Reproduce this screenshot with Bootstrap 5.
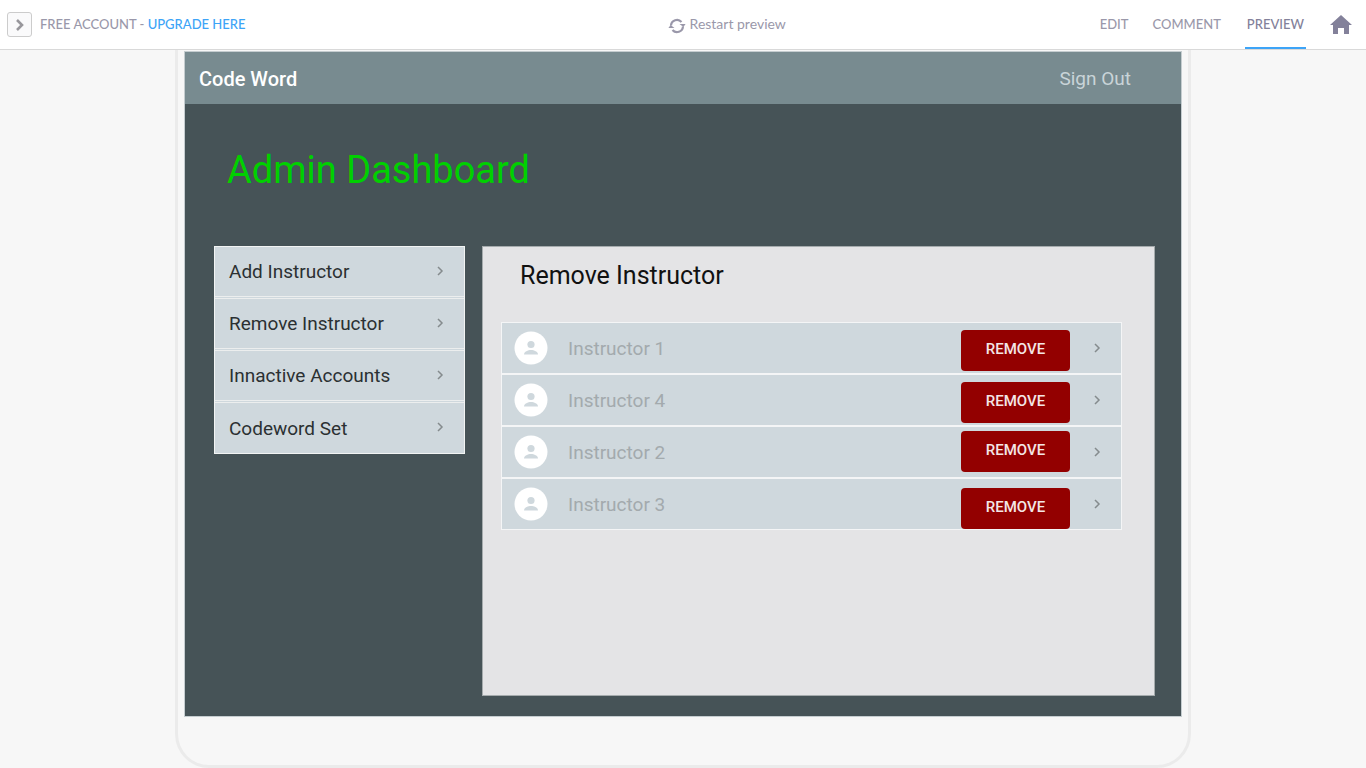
<!DOCTYPE html>
<html lang="en">
<head>
<meta charset="utf-8">
<meta name="viewport" content="width=device-width, initial-scale=1">
<title>Code Word - Admin Dashboard</title>
<link href="https://cdn.jsdelivr.net/npm/bootstrap@5.3.0/dist/css/bootstrap.min.css" rel="stylesheet">
<style>
  body { background: #f7f7f7; font-family: Roboto, sans-serif; }
  .topbar { height: 50px; border-bottom: 1px solid #d9d9d9; font-family: Lato, sans-serif; font-size: 13px; font-weight: 500; color: #9a98aa; padding: 0 14px 0 7px; }
  .side-left { flex: 7 1 0; }
  .side-right { flex: 6 1 0; }
  .topbar a, .topbar button { color: inherit; text-decoration: none; }
  .topbar .upgrade { color: #3da4f7; }
  .toggle-btn { width: 25px; height: 25px; background: #fafafb; border: 1px solid #ccc; border-radius: 3px; }
  .restart-btn { font-size: 14px; font-weight: 400; padding: 0 0 2px; }
  .tabs { gap: 24px; }
  .tabs a { display: flex; align-items: center; height: 49px; border-bottom: 2px solid transparent; padding-top: 2px; }
  .topbar .tabs a.active { color: #83819a; border-bottom-color: #3da4f7; padding-left: 2px; padding-right: 2px; }
  .device { max-width: 1016px; border: 3px solid #ebebeb; border-top: 0; border-radius: 0 0 34px 34px; padding: 2px 7px 49px; }
  .screen { background: #465357; box-shadow: 0 0 0 1px #c5cdd0; }
  .appbar { height: 52px; background: #788b90; color: #fff; padding: 2px 50px 0 14px; }
  .brand-name { font-size: 20px; font-weight: 500; }
  .appbar a { font-size: 19px; color: #c9d4d8; text-decoration: none; }
  .dash-title { color: #00d000; font-size: 38px; line-height: 46px; font-weight: 400; padding: 43px 42px 53px; }
  .work { padding: 0 26px 20px 29px; gap: 17px; }
  .menu { flex: 0 0 251px; border: 1px solid #f2f4f4; }
  .menu-item { height: 52px; background: #cfd8dd; color: #2b3032; font-size: 19px; padding: 2px 19px 0 14px; text-decoration: none; border-bottom: 3px double #eceeee; }
  .menu-item:last-child { height: 50px; border-bottom: 0; }
  .panel { background: #e4e4e6; border: 1px solid #a5abad; min-height: 450px; padding: 13px 32px 0 18px; }
  .panel h2 { font-size: 25px; line-height: 32px; font-weight: 400; color: #111; margin: 0 0 30px 19px; }
  .person { height: 52px; background: #cfd8dd; border: 1px solid #f4f5f6; font-size: 19px; color: #a3aaad; padding: 4px 19px 0 12px; }
  .person-name { margin-left: 20px; padding-bottom: 2px; }
  .remove-btn { width: 109px; height: 41px; background: #930000; color: #f3e6e6; border: 0; border-radius: 4px; font-size: 15px; font-weight: 500; padding: 0 0 2px; margin-right: 23px; }
  .remove-btn:hover { background: #7a0000; color: #fff; }
</style>
</head>
<body>
<svg class="d-none" aria-hidden="true">
  <symbol id="chev" viewBox="0 0 9 12"><path d="M2 2l4 4-4 4" fill="none" stroke="#858b8d" stroke-width="1.5"/></symbol>
  <symbol id="user" viewBox="0 0 34 34"><circle cx="17" cy="17" r="16.5" fill="#fff"/><circle cx="17" cy="13.5" r="3.6" fill="#cfd8dd"/><path d="M10 23.500c0-3 4-4.500 7-4.500s7 1.500 7 4.500z" fill="#cfd8dd"/></symbol>
</svg>
<header class="topbar bg-white d-flex align-items-center">
  <div class="side-left d-flex align-items-center gap-2">
    <button class="toggle-btn d-flex align-items-center justify-content-center p-0" type="button" aria-label="Expand">
      <svg width="10" height="12" viewBox="0 0 10 12"><path d="M2 1l5 5-5 5" fill="none" stroke="#98979c" stroke-width="2.600"/></svg>
    </button>
    <span class="account">FREE ACCOUNT - <a class="upgrade" href="#">UPGRADE HERE</a></span>
  </div>
  <button class="restart-btn btn border-0 d-flex align-items-center" type="button">
    <svg class="me-1 mt-1" width="18" height="16" viewBox="0 0 18 16"><g fill="none" stroke="#9a98aa" stroke-width="2.200"><path d="M3 7.500A6 6 0 0 1 13.500 4"/><path d="M15 8.500A6 6 0 0 1 4.500 12"/></g><path d="M11.500 6H17.600L15.400 9zM6.500 10H.400L2.600 7z" fill="#9a98aa"/></svg>
    Restart preview
  </button>
  <nav class="side-right tabs d-flex align-items-center justify-content-end">
    <a href="#">EDIT</a>
    <a href="#">COMMENT</a>
    <a class="active" href="#">PREVIEW</a>
    <a href="#" aria-label="Home"><svg width="22" height="19" viewBox="0 0 22 19"><path d="M11 0l11 10h-3v9h-5v-6H8v6H3v-9H0z" fill="#83819a"/></svg></a>
  </nav>
</header>
<main class="device mx-auto">
  <div class="screen">
    <div class="appbar d-flex align-items-center justify-content-between">
      <span class="brand-name">Code Word</span>
      <a href="#">Sign Out</a>
    </div>
    <h1 class="dash-title m-0">Admin Dashboard</h1>
    <div class="work d-flex align-items-start">
      <nav class="menu">
        <a class="menu-item d-flex align-items-center justify-content-between" href="#">Add Instructor <svg class="mb-1" width="9" height="12"><use href="#chev"/></svg></a>
        <a class="menu-item d-flex align-items-center justify-content-between" href="#">Remove Instructor <svg class="mb-1" width="9" height="12"><use href="#chev"/></svg></a>
        <a class="menu-item d-flex align-items-center justify-content-between" href="#">Innactive Accounts <svg class="mb-1" width="9" height="12"><use href="#chev"/></svg></a>
        <a class="menu-item d-flex align-items-center justify-content-between" href="#">Codeword Set <svg class="mb-1" width="9" height="12"><use href="#chev"/></svg></a>
      </nav>
      <section class="panel flex-grow-1">
        <h2>Remove Instructor</h2>
        <ul class="list-unstyled m-0">
          <li class="person d-flex align-items-center">
            <svg class="mb-1" width="34" height="34"><use href="#user"/></svg>
            <span class="person-name flex-grow-1">Instructor 1</span>
            <button class="remove-btn btn" type="button">REMOVE</button>
            <svg class="mb-1" width="9" height="12"><use href="#chev"/></svg>
          </li>
          <li class="person d-flex align-items-center">
            <svg class="mb-1" width="34" height="34"><use href="#user"/></svg>
            <span class="person-name flex-grow-1">Instructor 4</span>
            <button class="remove-btn btn" type="button">REMOVE</button>
            <svg class="mb-1" width="9" height="12"><use href="#chev"/></svg>
          </li>
          <li class="person d-flex align-items-center">
            <svg class="mb-1" width="34" height="34"><use href="#user"/></svg>
            <span class="person-name flex-grow-1">Instructor 2</span>
            <button class="remove-btn btn align-self-start" type="button">REMOVE</button>
            <svg class="mb-1" width="9" height="12"><use href="#chev"/></svg>
          </li>
          <li class="person d-flex align-items-center">
            <svg class="mb-1" width="34" height="34"><use href="#user"/></svg>
            <span class="person-name flex-grow-1">Instructor 3</span>
            <button class="remove-btn btn align-self-end" type="button">REMOVE</button>
            <svg class="mb-1" width="9" height="12"><use href="#chev"/></svg>
          </li>
        </ul>
      </section>
    </div>
  </div>
</main>
<script src="https://cdn.jsdelivr.net/npm/bootstrap@5.3.0/dist/js/bootstrap.bundle.min.js"></script>
</body>
</html>
